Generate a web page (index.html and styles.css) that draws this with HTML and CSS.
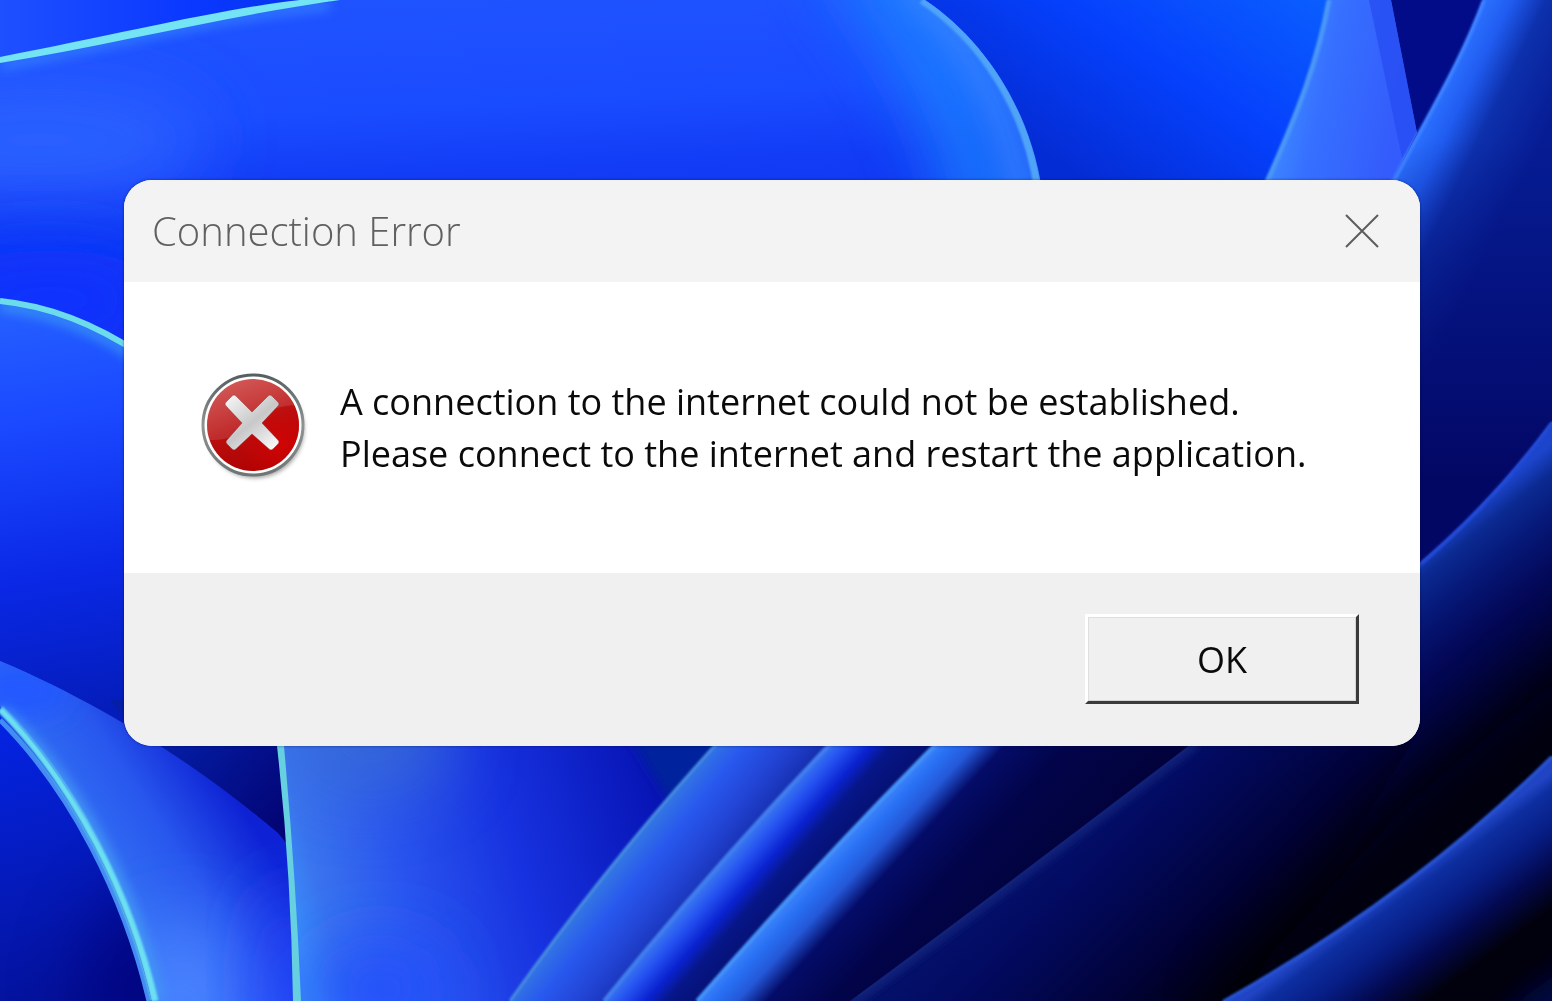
FILE: index.html
```html
<!DOCTYPE html>
<html lang="en">
<head>
<meta charset="utf-8">
<meta name="viewport" content="width=device-width, initial-scale=1">
<title>Connection Error</title>
<link rel="stylesheet" href="styles.css">
</head>
<body>
<svg class="wallpaper" viewBox="0 0 1552 1001" preserveAspectRatio="xMidYMid slice" aria-hidden="true">
  <defs>
    <filter id="b1" x="-20%" y="-20%" width="140%" height="140%"><feGaussianBlur stdDeviation="1"/></filter>
    <filter id="b6" x="-40%" y="-40%" width="180%" height="180%"><feGaussianBlur stdDeviation="6"/></filter>
    <filter id="b14" x="-50%" y="-50%" width="200%" height="200%"><feGaussianBlur stdDeviation="14"/></filter>
    <filter id="b35" x="-100%" y="-100%" width="300%" height="300%"><feGaussianBlur stdDeviation="35"/></filter>
    <linearGradient id="gCorner" x1="0" y1="0" x2="1" y2="0"><stop offset="0" stop-color="#1f50ff"/><stop offset=".5" stop-color="#0a38ff"/><stop offset="1" stop-color="#0430e0"/></linearGradient>
    <linearGradient id="gTop" gradientUnits="userSpaceOnUse" x1="300" y1="0" x2="320" y2="380"><stop offset="0" stop-color="#2053ff"/><stop offset=".3" stop-color="#1a4cff"/><stop offset=".48" stop-color="#123cf6"/><stop offset="1" stop-color="#0a2de8"/></linearGradient>
    <linearGradient id="gLeft" gradientUnits="userSpaceOnUse" x1="20" y1="300" x2="90" y2="720"><stop offset="0" stop-color="#2560ff"/><stop offset=".3" stop-color="#1a48ff"/><stop offset=".65" stop-color="#0a28e6"/><stop offset="1" stop-color="#041cb8"/></linearGradient>
    <linearGradient id="gBase" gradientUnits="userSpaceOnUse" x1="0" y1="720" x2="80" y2="1001"><stop offset="0" stop-color="#0424e4"/><stop offset="1" stop-color="#04129a"/></linearGradient>
    <linearGradient id="gWedge" gradientUnits="userSpaceOnUse" x1="160" y1="740" x2="290" y2="840"><stop offset="0" stop-color="#041ea8"/><stop offset="1" stop-color="#030270"/></linearGradient>
    <linearGradient id="gC" gradientUnits="userSpaceOnUse" x1="90" y1="860" x2="220" y2="775"><stop offset="0" stop-color="#3370f4"/><stop offset=".5" stop-color="#2857ee"/><stop offset="1" stop-color="#0e22d4"/></linearGradient>
    <linearGradient id="gE" gradientUnits="userSpaceOnUse" x1="290" y1="900" x2="660" y2="800"><stop offset="0" stop-color="#3b8cf8"/><stop offset=".08" stop-color="#3a74ee"/><stop offset=".3" stop-color="#2a55ee"/><stop offset=".6" stop-color="#1732e0"/><stop offset="1" stop-color="#0714b4"/></linearGradient>
    <linearGradient id="gF" gradientUnits="userSpaceOnUse" x1="612" y1="865" x2="690" y2="928"><stop offset="0" stop-color="#3478e2"/><stop offset=".28" stop-color="#2858ee"/><stop offset=".6" stop-color="#2244d4"/><stop offset="1" stop-color="#1228a4"/></linearGradient>
    <linearGradient id="gG" gradientUnits="userSpaceOnUse" x1="714" y1="872" x2="789" y2="938"><stop offset="0" stop-color="#3a78f0"/><stop offset=".16" stop-color="#2450f0"/><stop offset=".34" stop-color="#0a22d0"/><stop offset=".5" stop-color="#071688"/><stop offset="1" stop-color="#030c62"/></linearGradient>
    <linearGradient id="gH" gradientUnits="userSpaceOnUse" x1="819" y1="866" x2="965" y2="1002"><stop offset="0" stop-color="#3c84fa"/><stop offset=".07" stop-color="#2870f4"/><stop offset=".16" stop-color="#2458d8"/><stop offset=".27" stop-color="#040c68"/><stop offset=".5" stop-color="#02044a"/><stop offset="1" stop-color="#010238"/></linearGradient>
    <linearGradient id="gI" gradientUnits="userSpaceOnUse" x1="1080" y1="820" x2="1240" y2="990"><stop offset="0" stop-color="#040f68"/><stop offset=".2" stop-color="#020a60"/><stop offset=".65" stop-color="#010238"/><stop offset="1" stop-color="#00000c"/></linearGradient>
    <linearGradient id="gJ" gradientUnits="userSpaceOnUse" x1="1450" y1="525" x2="1590" y2="700"><stop offset="0" stop-color="#1c45cc"/><stop offset=".1" stop-color="#0b2a92"/><stop offset=".25" stop-color="#061878"/><stop offset=".45" stop-color="#030858"/><stop offset=".8" stop-color="#010128"/><stop offset="1" stop-color="#00000c"/></linearGradient>
    <linearGradient id="gK" gradientUnits="userSpaceOnUse" x1="1399" y1="885" x2="1464" y2="973"><stop offset="0" stop-color="#2044c4"/><stop offset=".12" stop-color="#0d2ea0"/><stop offset=".4" stop-color="#071d84"/><stop offset=".68" stop-color="#030950"/><stop offset="1" stop-color="#01010e"/></linearGradient>
    <linearGradient id="gL" gradientUnits="userSpaceOnUse" x1="1310" y1="0" x2="1160" y2="230"><stop offset="0" stop-color="#0a5cff"/><stop offset=".5" stop-color="#0540fc"/><stop offset="1" stop-color="#042cd4"/></linearGradient>
    <linearGradient id="gM" gradientUnits="userSpaceOnUse" x1="1290" y1="80" x2="1400" y2="105"><stop offset="0" stop-color="#3d86ff"/><stop offset=".3" stop-color="#3670ff"/><stop offset="1" stop-color="#345cfc"/></linearGradient>
    <linearGradient id="gO" gradientUnits="userSpaceOnUse" x1="1440" y1="90" x2="1542" y2="140"><stop offset="0" stop-color="#2b70ff"/><stop offset=".22" stop-color="#205cf0"/><stop offset=".5" stop-color="#0d30ac"/><stop offset="1" stop-color="#061c94"/></linearGradient>
    <linearGradient id="gFade" x1="0" y1="0" x2="0" y2="1"><stop offset="0" stop-color="#03096a" stop-opacity="0"/><stop offset="1" stop-color="#030764"/></linearGradient>
    <clipPath id="cTop"><path d="M0 60C120 36 220 10 330 2V0H925C985 40 1030 110 1042 190V400H0Z"/></clipPath>
    <clipPath id="cLeft"><path d="M0 299C50 304 95 322 140 352V760H0Z"/></clipPath>
    <clipPath id="cC"><path d="M0 661C120 712 210 776 278 833L300 860V1001H152C128 890 75 775 0 706Z"/></clipPath>
    <clipPath id="cE"><path d="M277 740Q293 880 296 1001H760V740Z"/></clipPath>
    <clipPath id="cI"><path d="M1195 741Q1000 890 850 1001H1552V560H1420Z"/></clipPath>
    <clipPath id="cO"><path d="M1483 0C1461 60 1430 110 1390 186V620H1552V0Z"/></clipPath>
    <clipPath id="cBase"><path d="M0 720C70 790 130 900 150 1001H0Z"/></clipPath>
  </defs>

  <rect width="1552" height="1001" fill="#020650"/>
  <rect width="380" height="90" fill="url(#gCorner)"/>
  <path d="M900 0H1400V220H900Z" fill="url(#gL)"/>
  <path d="M1380 0H1500L1410 150Z" fill="#020b88"/>

  <g clip-path="url(#cTop)">
    <rect width="1060" height="400" fill="url(#gTop)"/>
    <ellipse cx="40" cy="140" rx="170" ry="60" fill="#2c60ff" filter="url(#b35)"/>
    <ellipse cx="50" cy="300" rx="120" ry="50" fill="#0a32ff" filter="url(#b35)"/>
    <path d="M124 190V420" stroke="#0626dc" stroke-width="22" opacity=".8" filter="url(#b14)"/>
    <path d="M850 -60C930 30 975 110 1000 260" fill="none" stroke="#1f88ff" stroke-width="70" opacity=".9" filter="url(#b35)"/>
    <path d="M905 -20C975 45 1015 110 1028 220" fill="none" stroke="#3c8cff" stroke-width="24" opacity=".8" filter="url(#b14)"/>
    <path d="M922 0C982 40 1027 110 1038 190" fill="none" stroke="#50a4f8" stroke-width="8" filter="url(#b1)"/>
    <path d="M0 66C120 42 220 16 330 5" fill="none" stroke="#3c90ff" stroke-width="8" opacity=".8" filter="url(#b6)"/>
  </g>
  <path d="M0 57C120 34 220 9 300 0H340C220 17 120 43 0 63Z" fill="#74e4f4"/>

  <g clip-path="url(#cLeft)">
    <rect y="290" width="140" height="480" fill="url(#gLeft)"/>
    <path d="M124 340V760" stroke="#0a22c8" stroke-width="20" opacity=".5" filter="url(#b14)"/>
    <path d="M0 306C50 311 95 329 140 359" fill="none" stroke="#3a9cf4" stroke-width="8" filter="url(#b6)"/>
  </g>
  <path d="M0 301C50 306 95 324 140 354" fill="none" stroke="#6cdcec" stroke-width="6"/>

  <path d="M110 700H310V870H240Z" fill="url(#gWedge)"/>
  <path d="M0 700L170 900V1001H0Z" fill="url(#gBase)"/>
  <g clip-path="url(#cBase)"><ellipse cx="150" cy="1000" rx="70" ry="110" fill="#040078" opacity=".7" filter="url(#b35)"/></g>
  <g clip-path="url(#cC)">
    <rect y="650" width="310" height="351" fill="url(#gC)"/>
    <ellipse cx="185" cy="1010" rx="60" ry="90" fill="#4a82ff" filter="url(#b35)"/>
    <ellipse cx="290" cy="990" rx="28" ry="110" fill="#2440fa" filter="url(#b35)"/>
    <ellipse cx="20" cy="690" rx="50" ry="28" fill="#2458ff" filter="url(#b14)"/>
    <path d="M0 712C80 785 132 895 158 1001" fill="none" stroke="#4296f4" stroke-width="14" filter="url(#b6)"/>
  </g>
  <path d="M0 720C70 790 124 895 149 1001" fill="none" stroke="#428cf4" stroke-width="5"/>
  <path d="M0 709C75 785 130 895 155 1001" fill="none" stroke="#6ce0f2" stroke-width="7" filter="url(#b1)"/>

  <g clip-path="url(#cE)">
    <rect x="270" y="740" width="500" height="261" fill="url(#gE)"/>
    <ellipse cx="370" cy="740" rx="85" ry="55" fill="#3b70d0" opacity=".7" filter="url(#b35)"/>
    <ellipse cx="380" cy="990" rx="70" ry="50" fill="#2450fc" filter="url(#b35)"/>
    <path d="M625 730L675 810L740 730Z" fill="#04209c" filter="url(#b6)"/>
  </g>
  <path d="M277 746H284Q296 880 301 1001H293Q291 870 277 746Z" fill="#66cfe0"/>

  <path d="M718 742Q610 860 510 1001H700L930 742Z" fill="url(#gF)"/>
  <path d="M718 742Q610 860 510 1001" fill="none" stroke="#478ce0" stroke-width="3" filter="url(#b1)"/>
  <path d="M832 742Q710 870 604 1001H800L1040 742Z" fill="url(#gG)"/>
  <path d="M832 742Q710 870 604 1001" fill="none" stroke="#427eee" stroke-width="4" filter="url(#b1)"/>
  <path d="M938 742Q820 860 697 1001H1100L1420 742Z" fill="url(#gH)"/>
  <path d="M938 742Q820 860 697 1001" fill="none" stroke="#4492f8" stroke-width="4" filter="url(#b1)"/>

  <g clip-path="url(#cI)">
    <rect x="840" y="550" width="712" height="451" fill="url(#gI)"/>
    <path d="M1195 741Q1000 890 850 1001" fill="none" stroke="#1b2f86" stroke-width="9" filter="url(#b6)"/>
  </g>

  <path d="M1390 160H1552V620H1390Z" fill="#040b70"/>
  <g clip-path="url(#cO)">
    <rect x="1380" width="172" height="620" fill="url(#gO)"/>
    <rect x="1380" y="140" width="172" height="340" fill="url(#gFade)"/>
    <rect x="1380" y="480" width="172" height="140" fill="#030764"/>
  </g>
  <path d="M1552 421Q1490 505 1410 571V746L1250 1001H1552Z" fill="url(#gJ)"/>
  <path d="M1552 423Q1490 507 1410 573" fill="none" stroke="#2149d4" stroke-width="4" filter="url(#b1)"/>
  <path d="M1610 680L1430 830L1250 1030" fill="none" stroke="#000008" stroke-width="70" opacity=".9" filter="url(#b35)"/>
  <path d="M1552 756Q1410 896 1223 1001H1552Z" fill="url(#gK)"/>
  <path d="M1552 757Q1410 897 1223 1002" fill="none" stroke="#2650cc" stroke-width="4" filter="url(#b1)"/>
  <ellipse cx="1552" cy="1001" rx="60" ry="20" fill="#050b60" opacity=".7" transform="rotate(-35 1552 1001)" filter="url(#b14)"/>

  <path d="M1328 0C1317 60 1298 110 1264 186H1390L1417 133L1391 0Z" fill="url(#gM)"/>
  <path d="M1369 0L1402 158L1417 133L1391 0Z" fill="#264cf2" opacity=".75"/>
  <path d="M1329 0C1318 60 1299 110 1266 184" fill="none" stroke="#4a96f8" stroke-width="5" filter="url(#b1)"/>
  <path d="M1484 0C1462 60 1431 110 1391 186" fill="none" stroke="#3c80ff" stroke-width="4" filter="url(#b1)"/>
</svg>

<main class="desktop">
  <section class="dialog" role="alertdialog" aria-labelledby="dialog-title" aria-describedby="dialog-message">
    <header class="titlebar">
      <h1 class="title" id="dialog-title">Connection Error</h1>
      <button class="close" type="button" aria-label="Close">
        <svg viewBox="0 0 36 36" width="36" height="36" aria-hidden="true"><path d="M2 2L34 34M34 2L2 34" fill="none" stroke="#5c5c5c" stroke-width="2"/></svg>
      </button>
    </header>
    <div class="content">
      <svg class="error-icon" viewBox="0 0 108 112" width="108" height="112" aria-hidden="true">
        <defs>
          <linearGradient id="rim" x1="0" y1="0" x2="0" y2="1"><stop offset="0" stop-color="#54605f"/><stop offset=".5" stop-color="#8d9493"/><stop offset="1" stop-color="#6d7473"/></linearGradient>
          <linearGradient id="red" x1=".3" y1="0" x2=".65" y2="1"><stop offset="0" stop-color="#c83432"/><stop offset=".5" stop-color="#b81010"/><stop offset="1" stop-color="#b00000"/></linearGradient>
          <radialGradient id="glow" cx=".8" cy=".7" r=".45"><stop offset="0" stop-color="#d00404"/><stop offset="1" stop-color="#d00404" stop-opacity="0"/></radialGradient>
          <linearGradient id="gloss" x1="0" y1="0" x2=".7" y2="1"><stop offset="0" stop-color="#fff" stop-opacity=".2"/><stop offset="1" stop-color="#fff" stop-opacity=".08"/></linearGradient>
          <linearGradient id="cross" gradientUnits="userSpaceOnUse" x1="30" y1="24" x2="76" y2="80"><stop offset="0" stop-color="#f4f4f4"/><stop offset=".48" stop-color="#c8c8c8"/><stop offset="1" stop-color="#fff"/></linearGradient>
          <filter id="soft" x="-20%" y="-20%" width="140%" height="140%"><feGaussianBlur stdDeviation="2"/></filter>
        </defs>
        <circle cx="55" cy="57" r="49" fill="#777" opacity=".7" filter="url(#soft)"/>
        <circle cx="53" cy="53" r="50" fill="#fff" stroke="url(#rim)" stroke-width="3"/>
        <circle cx="53" cy="53" r="46" fill="url(#red)"/>
        <circle cx="53" cy="53" r="46" fill="url(#glow)"/>
        <path d="M9 68A46 46 0 0 1 94 33C74 34 64 42 52 53C40 63 26 69 9 68Z" fill="url(#gloss)"/>
        <path d="M52 40L68 24Q70 22 72 24L78 30Q80 32 78 34L62 51L78 68Q80 70 78 72L73 77Q71 79 69 77L52 62L36 77Q34 79 32 77L27 72Q25 70 27 68L42 51L26 34Q24 32 26 30L32 24Q34 22 36 24Z" fill="url(#cross)" stroke="#8c1414" stroke-width="1" stroke-opacity=".4"/>
      </svg>
      <p class="message" id="dialog-message">A connection to the internet could not be established.<br>Please connect to the internet and restart the application.</p>
    </div>
    <footer class="actions">
      <button class="ok" type="button">OK</button>
    </footer>
  </section>
</main>
</body>
</html>
```
FILE: styles.css
```css
* {
  box-sizing: border-box;
}

body {
  margin: 0;
  min-height: 100vh;
  background: #020650;
  color: #0a0a0a;
  font-family: "Open Sans", "Noto Sans", sans-serif;
}

.wallpaper {
  position: fixed;
  inset: 0;
  z-index: -1;
  width: 100%;
  height: 100%;
}

.desktop {
  padding: 180px 132px 40px 124px;
}

.dialog {
  overflow: hidden;
  border-radius: 28px;
  background: #fff;
  box-shadow: 0 0 3px rgba(0, 0, 60, 0.5);
}

.titlebar {
  display: flex;
  align-items: center;
  justify-content: space-between;
  min-height: 102px;
  padding: 0 40px 0 28px;
  background: #f3f3f3;
}

.title {
  margin: 0;
  color: #606060;
  font-size: 40px;
  font-weight: 300;
  line-height: 52px;
}

.close {
  display: flex;
  padding: 0;
  border: 0;
  background: none;
}

.content {
  display: flex;
  align-items: center;
  gap: 32px;
  min-height: 291px;
  padding: 48px 76px;
}

.error-icon {
  flex: none;
}

.message {
  margin: 0;
  font-size: 36px;
  line-height: 52px;
}

.actions {
  display: flex;
  justify-content: flex-end;
  padding: 41px 61px 42px;
  background: #f0f0f0;
}

.ok {
  width: 274px;
  height: 90px;
  padding: 0;
  border: 3px solid;
  border-color: #fff #3a3a3a #3a3a3a #fff;
  background: #f0f0f0;
  box-shadow: inset 1px 1px #dedede, inset -1px -1px #d4d4d4;
  color: #0a0a0a;
  font: inherit;
  font-size: 36px;
}
```
